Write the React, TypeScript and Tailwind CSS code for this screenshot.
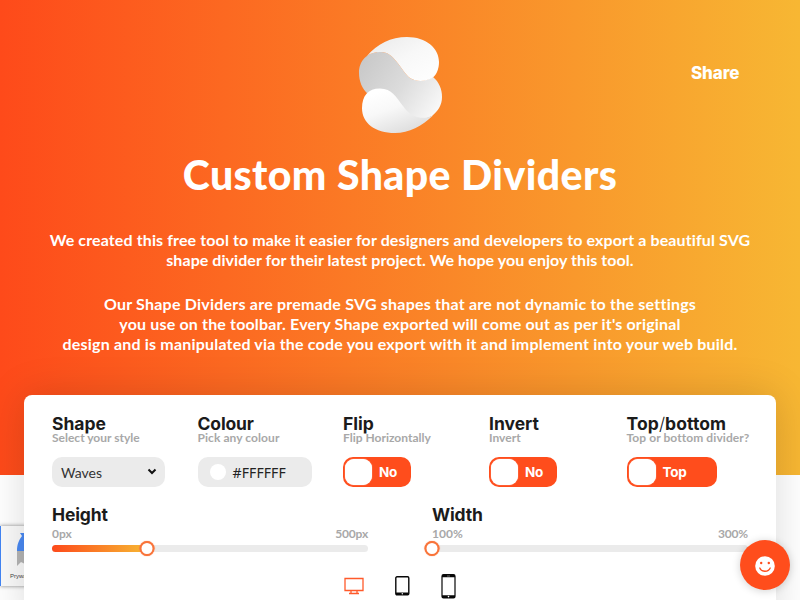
import type { ReactNode } from "react";

const paragraphOne = [
  { text: "We created this free tool to make it easier for designers and developers to export a beautiful SVG", spacing: "tracking-[0.120px]" },
  { text: "shape divider for their latest project. We hope you enjoy this tool.", spacing: "tracking-[0.060px]" },
];
const paragraphTwo = [
  { text: "Our Shape Dividers are premade SVG shapes that are not dynamic to the settings", spacing: "tracking-[0.220px]" },
  { text: "you use on the toolbar. Every Shape exported will come out as per it's original", spacing: "tracking-[0.165px]" },
  { text: "design and is manipulated via the code you export with it and implement into your web build.", spacing: "tracking-[0.190px]" },
];

function Logo() {
  return (
    <svg width="84" height="98" viewBox="0 0 84 98" aria-hidden="true">
      <defs>
        <linearGradient id="top" x1="0" y1="0" x2="1" y2="1">
          <stop offset="0" stopColor="#e9e9e9" />
          <stop offset="0.5" stopColor="#f8f8f8" />
          <stop offset="1" stopColor="#fff" />
        </linearGradient>
        <linearGradient id="middle" x1="0" y1="0.2" x2="1" y2="0.8">
          <stop offset="0" stopColor="#c9c9c9" />
          <stop offset="0.5" stopColor="#dcdcdc" />
          <stop offset="1" stopColor="#fbfbfb" />
        </linearGradient>
        <linearGradient id="bottom" x1="0.2" y1="0.1" x2="0.7" y2="1">
          <stop offset="0" stopColor="#fff" />
          <stop offset="0.4" stopColor="#f8f8f8" />
          <stop offset="1" stopColor="#dcdcdc" />
        </linearGradient>
      </defs>
      <path d="M22 16C29 15.500 34 20 38 25C43 31 48 39 52 42C59 46.500 68 45 75 41C81 46 84 53 84 61C84 69 80 75 74 80L50 90L10 58C4 53 1 45 1 37C1 25 9 16 22 16Z" fill="url(#middle)" />
      <path d="M9 20C19 8 33 1 49 1C68 1 81 12 81 26C81 32 79 38 75 41.500C68 45.500 59 46.500 52 42C48 39 43 31 38 25C34 20 29 15.500 22 16C17 16 13 17 9 20Z" fill="url(#top)" />
      <path d="M22 52.500C10 52.500 4 60 4 72C4 87 17 97 37 97C51 97 64 90 75 79.500C71 81.500 67 82 63 81.700C55 81 50 77 45 70C38 61 34 52.500 22 52.500Z" fill="url(#bottom)" />
    </svg>
  );
}

function Field({ title, hint, titleClass, hintClass, children }: { title: ReactNode; hint: string; titleClass: string; hintClass: string; children: ReactNode }) {
  return (
    <div className="flex flex-col items-start">
      <h3 className={`h-[18px] font-['Inter',sans-serif] text-[17.500px] leading-[20px] font-bold text-[#1b1b1b] ${titleClass}`}>{title}</h3>
      <p className={`h-[12px] font-['Lato',sans-serif] text-[12px] leading-[12px] font-bold text-[#a8a8a8] ${hintClass}`}>{hint}</p>
      <div className="mt-[13px]">{children}</div>
    </div>
  );
}

function Toggle({ label, className }: { label: string; className: string }) {
  return (
    <div className={`flex h-[30px] items-center rounded-[10px] bg-[#ff4d1c] pl-[2px] ${className}`}>
      <div className="h-[26px] w-[27px] rounded-[9px] bg-white shadow-[0_0_1px_#ffffff]" />
      <span className="ml-[7px] mt-px font-['Inter',sans-serif] text-[13.500px] leading-none font-bold tracking-[-0.300px] text-white">{label}</span>
    </div>
  );
}

function Slider({ title, min, max, value, titleClass }: { title: string; min: string; max: string; value: number; titleClass: string }) {
  return (
    <div className="w-[316px]">
      <h3 className={`font-['Inter',sans-serif] text-[17.500px] leading-[20px] font-bold text-[#1b1b1b] ${titleClass}`}>{title}</h3>
      <div className="mt-[2px] flex h-[13px] justify-between font-['Lato',sans-serif] text-[12px] leading-[13px] font-bold text-[#a8a8a8]">
        <span>{min}</span>
        <span className="tracking-[-0.200px]">{max}</span>
      </div>
      <div className="relative mt-[5px] h-[7px] rounded-full bg-[#ebebeb]">
        <div className="h-full rounded-full bg-linear-to-r/srgb from-[#fd4a1b] to-[#f7b733]" style={{ width: value }} />
        <div className="absolute top-[-4px] h-[15px] w-[15px] -translate-x-1/2 rounded-full border-2 border-[#f9743a] bg-white shadow-[0_0_1px_#f9743a]" style={{ left: value }} />
      </div>
    </div>
  );
}

export default function App() {
  return (
    <div className="relative h-[600px] w-[800px] overflow-hidden bg-white font-['Lato',sans-serif]">
      <header className="flex h-[475px] flex-col items-center bg-linear-to-r/srgb from-[#fe4a1a] to-[#f7b733] text-white">
        <div className="mt-[36px] h-[98px]"><Logo /></div>
        <a className="absolute top-[62px] left-[691px] font-['Inter',sans-serif] text-[17px] leading-[22px] font-extrabold tracking-[-0.100px]">Share</a>
        <h1 className="mt-[16px] font-['Lato',sans-serif] text-[41px] leading-[50px] font-black whitespace-nowrap tracking-[0.400px]">Custom Shape Dividers</h1>
        <div className="mt-[30px] flex flex-col items-center text-[16px] leading-[20px] font-bold whitespace-nowrap">
          {paragraphOne.map((line) => <p key={line.text} className={line.spacing}>{line.text}</p>)}
        </div>
        <div className="mt-[24px] flex flex-col items-center text-[16px] leading-[20px] font-bold whitespace-nowrap">
          {paragraphTwo.map((line) => <p key={line.text} className={line.spacing}>{line.text}</p>)}
        </div>
      </header>

      <div className="absolute top-[526px] left-0 h-[60px] w-[70px] border-l border-[#4285f4] bg-[#fafafa] shadow-[0_0_4px_#888]">
        <svg width="40" height="60" viewBox="0 0 40 60" aria-hidden="true">
          <path d="M16 25C16 18 18 14 21 10L19 7H35V25Z" fill="#4a8af4" />
          <path d="M16 25H35V38H24L20 36L16 40Z" fill="#b5b5b5" />
        </svg>
        <span className="absolute top-[46px] left-[9px] font-['Liberation_Sans',sans-serif] text-[6px] leading-[8px] text-[#444]">Prywatność</span>
      </div>

      <main className="absolute top-[395px] left-[24px] h-[230px] w-[752px] rounded-[8px] bg-white px-[28px] pt-[19px] shadow-[0_0_40px_rgba(0,0,0,0.15)]">
        <div className="grid grid-cols-[145.500px_145.500px_146px_137.500px_1fr] whitespace-nowrap">
          <Field title="Shape" hint="Select your style" titleClass="tracking-[0px]" hintClass="tracking-[0px]">
            <div className="flex h-[30px] w-[113px] items-center justify-between rounded-[10px] bg-[#ebebeb] pr-[8px] pl-[9px] text-[14px] text-[#333]">
              <span>Waves</span>
              <svg width="10" height="8" viewBox="0 0 10 8"><path d="M1.500 1.500L5 5L8.500 1.500" fill="none" stroke="#111" strokeWidth="2" /></svg>
            </div>
          </Field>
          <Field title="Colour" hint="Pick any colour" titleClass="tracking-[-0.150px]" hintClass="tracking-[0.070px]">
            <div className="flex h-[30px] w-[114px] items-center rounded-[10px] bg-[#ebebeb] pl-[12px] text-[#222]">
              <div className="h-4 w-4 rounded-full bg-white" />
              <span className="ml-[7px] mt-px font-['Noto_Sans',sans-serif] text-[14px] leading-none tracking-[0.100px]">#FFFFFF</span>
            </div>
          </Field>
          <Field title="Flip" hint="Flip Horizontally" titleClass="tracking-[0px]" hintClass="tracking-[0px]"><Toggle label="No" className="w-[68px]" /></Field>
          <Field title="Invert" hint="Invert" titleClass="tracking-[0px]" hintClass="tracking-[0px]"><Toggle label="No" className="w-[68px]" /></Field>
          <Field title={<>Top<span className="font-light">/</span>bottom</>} hint="Top or bottom divider?" titleClass="tracking-[0.100px]" hintClass="tracking-[0.080px]"><Toggle label="Top" className="w-[90px]" /></Field>
        </div>
        <div className="mt-[18px] flex gap-[64px]">
          <Slider title="Height" min="0px" max="500px" value={95} titleClass="tracking-[-0.150px]" />
          <Slider title="Width" min="100%" max="300%" value={0} titleClass="tracking-[-0.150px]" />
        </div>
        <div className="mt-[21px] flex h-[26px] items-center pl-[292px]">
          <svg width="20" height="18" viewBox="0 0 20 18" fill="none" stroke="#ff5a2b" strokeWidth="1.300"><path d="M1 1.500H19V13.500H1ZM7 13.500V16M13 13.500V16M5 16.500H15" /></svg>
          <svg className="ml-[31px]" width="15" height="20" viewBox="0 0 15 20"><rect x=".8" y=".8" width="13" height="18" rx="1.200" fill="none" stroke="#080808" strokeWidth="1.400" /><path d="M1 16.500H13.500V19H1Z" fill="#080808" /><circle cx="7.300" cy="17.700" r=".7" fill="#fff" /></svg>
          <svg className="ml-[31px]" width="15" height="25" viewBox="0 0 15 25"><rect x="1" y=".7" width="13" height="23.300" rx="1.500" fill="none" stroke="#080808" strokeWidth="1.200" /><path d="M1 1H14V3.200H1ZM1 21.300H14V24H1Z" fill="#080808" /><path d="M6 2H9" stroke="#aaa" strokeWidth=".6" /><circle cx="7.500" cy="22.600" r=".8" fill="#fff" /></svg>
        </div>
      </main>

      <button className="absolute top-[540px] left-[740px] flex h-[50px] w-[50px] items-center justify-center rounded-full bg-[#ff4d1c] shadow-[0_1px_8px_rgba(0,0,0,0.18)]" aria-label="Feedback">
        <svg className="mt-px" width="20" height="20" viewBox="0 0 20 20"><circle cx="10" cy="10" r="9.800" fill="#fff" /><circle cx="6.200" cy="7" r="1.200" fill="#ff4d1c" /><circle cx="13.800" cy="7" r="1.200" fill="#ff4d1c" /><path d="M4.800 12C6.500 16.300 13.500 16.300 15.200 12" fill="none" stroke="#ff4d1c" strokeWidth="1.300" strokeLinecap="round" /></svg>
      </button>
    </div>
  );
}
